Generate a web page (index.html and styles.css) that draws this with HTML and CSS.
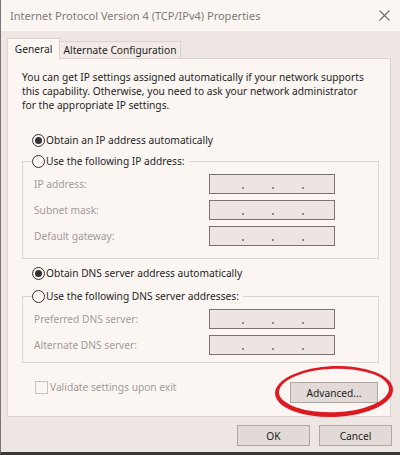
FILE: index.html
```html
<!DOCTYPE html>
<html lang="en">
<head>
<meta charset="utf-8">
<title>Internet Protocol Version 4 (TCP/IPv4) Properties</title>
<link rel="stylesheet" href="styles.css">
</head>
<body>
<div class="window">
  <div class="titlebar">
    <span class="title">Internet Protocol Version 4 (TCP/IPv4) Properties</span>
    <svg class="close" width="11" height="11" viewBox="0 0 11 11" aria-label="Close">
      <path d="M0.5 0.5L10.5 10.5M10.5 0.5L0.5 10.5" stroke="#716a68" stroke-width="1.1" fill="none"/>
    </svg>
  </div>
  <div class="body">
    <div class="tabs">
      <div class="tab active">General</div>
      <div class="tab">Alternate Configuration</div>
    </div>
    <div class="panel">
      <p class="desc"><span class="line">You can get IP settings assigned automatically if your network supports</span><span class="line">this capability. Otherwise, you need to ask your network administrator</span><span class="line">for the appropriate IP settings.</span></p>

      <div class="radio-row"><span class="radio checked"></span><span>Obtain an IP address automatically</span></div>
      <fieldset class="group group-ip">
        <legend><span class="legend-in"><span class="radio"></span><span>Use the following IP address:</span></span></legend>
        <div class="field"><span class="label">IP address:</span><span class="ip"><i></i><i></i><i></i></span></div>
        <div class="field"><span class="label">Subnet mask:</span><span class="ip"><i></i><i></i><i></i></span></div>
        <div class="field"><span class="label">Default gateway:</span><span class="ip"><i></i><i></i><i></i></span></div>
      </fieldset>

      <div class="radio-row"><span class="radio checked"></span><span>Obtain DNS server address automatically</span></div>
      <fieldset class="group group-dns">
        <legend><span class="legend-in"><span class="radio"></span><span>Use the following DNS server addresses:</span></span></legend>
        <div class="field"><span class="label">Preferred DNS server:</span><span class="ip"><i></i><i></i><i></i></span></div>
        <div class="field"><span class="label">Alternate DNS server:</span><span class="ip"><i></i><i></i><i></i></span></div>
      </fieldset>

      <div class="footer">
        <div class="check"><span class="box"></span><span>Validate settings upon exit</span></div>
        <button class="btn adv" type="button">Advanced...</button>
      </div>
    </div>
    <div class="actions">
      <button class="btn act" type="button">OK</button>
      <button class="btn act" type="button">Cancel</button>
    </div>
  </div>
</div>
<svg class="annotation" width="400" height="455" viewBox="0 0 400 455">
  <g transform="rotate(-2 334 391.5)">
    <path fill="#dc1a22" fill-rule="evenodd" d="M275,391.5 a59,25.5 0 1,0 118,0 a59,25.5 0 1,0 -118,0 Z M279,390.5 a55,21.8 0 1,0 110,0 a55,21.8 0 1,0 -110,0 Z"/>
  </g>
</svg>
</body>
</html>
```

FILE: styles.css
```css
* { box-sizing: border-box; }
html, body { margin: 0; padding: 0; }
body {
  width: 400px;
  height: 455px;
  overflow: hidden;
  background: #f4efed;
  font-family: "Noto Sans", "Open Sans", sans-serif;
  font-size: 10.2px;
  color: #1e1e1e;
}
.window {
  width: 400px;
  height: 455px;
  border-left: 1px solid #7a7574;
  border-bottom: 3px solid #3a3939;
  background: #ede6e3;
  display: flex;
  flex-direction: column;
}
.titlebar {
  height: 31px;
  flex: none;
  background: #fcf6f3;
  display: flex;
  align-items: center;
  justify-content: space-between;
  padding: 0 10px 0 9px;
}
.title {
  font-size: 11px;
  color: #7f7977;
}
.close { display: block; }
.body {
  flex: 1;
  padding: 7px 9px 0 6px;
  display: flex;
  flex-direction: column;
}
.tabs {
  height: 20px;
  display: flex;
  align-items: flex-end;
}
.tab {
  border: 1px solid #d9d2cf;
  border-bottom: none;
  display: flex;
  align-items: center;
  justify-content: center;
}
.tab.active {
  width: 53px;
  height: 21px;
  margin-bottom: -1px;
  background: #fcf6f3;
  position: relative;
  z-index: 1;
}
.tab:not(.active) {
  width: 122px;
  height: 17px;
  margin-left: -1px;
  background: #f1eae7;
}
.panel {
  height: 359px;
  flex: none;
  border: 1px solid #d9d2cf;
  background: #fcf6f3;
  padding: 11px 11px 0 14px;
}
.desc {
  margin: 0;
  display: flex;
  flex-direction: column;
}
.desc .line {
  display: block;
  height: 14px;
  line-height: 14px;
  white-space: nowrap;
}
.radio-row {
  height: 14px;
  display: flex;
  align-items: center;
  margin-top: 21px;
  padding-left: 10px;
}
.group-ip + .radio-row { margin-top: 7px; }
.radio {
  width: 13px;
  height: 13px;
  border: 1px solid #333;
  border-radius: 50%;
  margin-right: 1px;
  flex: none;
  display: flex;
  align-items: center;
  justify-content: center;
  background: #fcf6f3;
}
.radio.checked::after {
  content: "";
  width: 7px;
  height: 7px;
  border-radius: 50%;
  background: #333;
}
.group {
  margin: 7px 0 0 0;
  border: 1px solid #dcd5d2;
  padding: 6px 0 12px 9px;
  min-width: 0;
}
.group-dns { margin-top: 9px; padding-bottom: 7px; }
.group legend {
  padding: 0 4px 0 0;
  line-height: 14px;
}
.legend-in {
  display: flex;
  align-items: center;
  height: 14px;
}
.field {
  height: 20px;
  display: flex;
  align-items: center;
}
.field + .field { margin-top: 6px; }
.label {
  width: 175px;
  margin-left: 2px;
  color: #a29b99;
}
.ip {
  width: 126px;
  height: 20px;
  border: 1px solid #7c7371;
  background: #ece5e2;
  display: flex;
  align-items: flex-start;
  padding: 12px 0 0 32px;
  gap: 28px;
}
.ip i {
  width: 2px;
  height: 2px;
  background: #8f8886;
  display: block;
}
.footer {
  margin-top: 17px;
  display: flex;
  justify-content: space-between;
  align-items: flex-start;
  padding: 0 1px 0 13px;
}
.check {
  display: flex;
  align-items: center;
  height: 14px;
  color: #a29b99;
}
.box {
  width: 13px;
  height: 13px;
  border: 1px solid #c9c2bf;
  margin-right: 2px;
}
.btn {
  font: inherit;
  color: #1e1e1e;
  background: #e1dad7;
  border: 1px solid #ada7a5;
  padding: 0;
  margin: 0;
  height: 21px;
  border-radius: 0;
}
.adv {
  width: 88px;
  margin-top: 2px;
}
.actions {
  margin-top: 8px;
  margin-right: -1px;
  display: flex;
  justify-content: flex-end;
  gap: 9px;
}
.act { width: 73px; }
.annotation {
  position: absolute;
  left: 0;
  top: 0;
  pointer-events: none;
}
```
